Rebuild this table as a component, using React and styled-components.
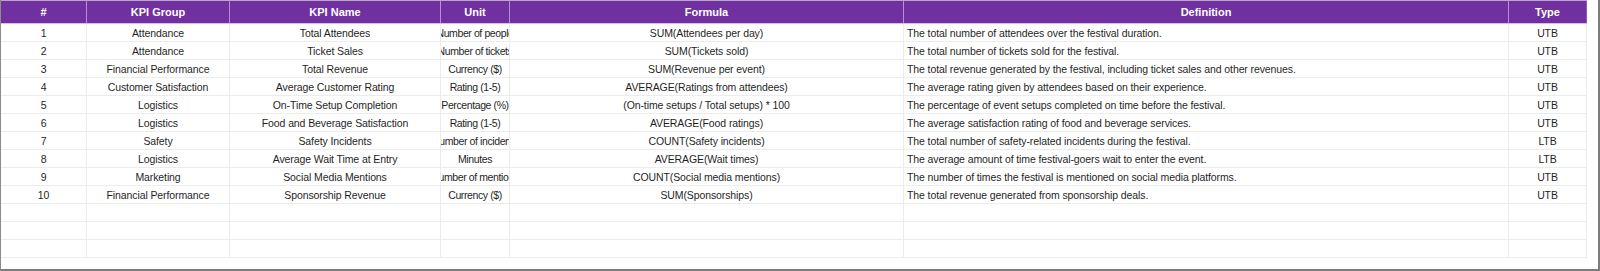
import React from "react";
import styled, { createGlobalStyle } from "styled-components";

const GlobalStyle = createGlobalStyle`
  html, body {
    margin: 0;
    padding: 0;
    background: #ffffff;
  }
  body {
    font-family: "Liberation Sans", Arial, sans-serif;
  }
`;

const columns = [
  { key: "id", label: "#", width: 86, align: "center" },
  { key: "group", label: "KPI Group", width: 143, align: "center" },
  { key: "name", label: "KPI Name", width: 211, align: "center" },
  { key: "unit", label: "Unit", width: 69, align: "center", tight: true },
  { key: "formula", label: "Formula", width: 394, align: "center" },
  { key: "definition", label: "Definition", width: 605, align: "left" },
  { key: "type", label: "Type", width: 78, align: "center" },
];

const rows = [
  ["1", "Attendance", "Total Attendees", "Number of people", "SUM(Attendees per day)", "The total number of attendees over the festival duration.", "UTB"],
  ["2", "Attendance", "Ticket Sales", "Number of tickets", "SUM(Tickets sold)", "The total number of tickets sold for the festival.", "UTB"],
  ["3", "Financial Performance", "Total Revenue", "Currency ($)", "SUM(Revenue per event)", "The total revenue generated by the festival, including ticket sales and other revenues.", "UTB"],
  ["4", "Customer Satisfaction", "Average Customer Rating", "Rating (1-5)", "AVERAGE(Ratings from attendees)", "The average rating given by attendees based on their experience.", "UTB"],
  ["5", "Logistics", "On-Time Setup Completion", "Percentage (%)", "(On-time setups / Total setups) * 100", "The percentage of event setups completed on time before the festival.", "UTB"],
  ["6", "Logistics", "Food and Beverage Satisfaction", "Rating (1-5)", "AVERAGE(Food ratings)", "The average satisfaction rating of food and beverage services.", "UTB"],
  ["7", "Safety", "Safety Incidents", "Number of incidents", "COUNT(Safety incidents)", "The total number of safety-related incidents during the festival.", "LTB"],
  ["8", "Logistics", "Average Wait Time at Entry", "Minutes", "AVERAGE(Wait times)", "The average amount of time festival-goers wait to enter the event.", "LTB"],
  ["9", "Marketing", "Social Media Mentions", "Number of mentions", "COUNT(Social media mentions)", "The number of times the festival is mentioned on social media platforms.", "UTB"],
  ["10", "Financial Performance", "Sponsorship Revenue", "Currency ($)", "SUM(Sponsorships)", "The total revenue generated from sponsorship deals.", "UTB"],
  ["", "", "", "", "", "", ""],
  ["", "", "", "", "", "", ""],
  ["", "", "", "", "", "", ""],
];

const Frame = styled.div`
  width: 1600px;
  height: 271px;
  box-sizing: border-box;
  border-left: 1px solid #8c8c8c;
  border-right: 2px solid #7c7c7c;
  border-bottom: 2px solid #7c7c7c;
  background: #ffffff;
  overflow: hidden;
`;

const Sheet = styled.div`
  width: 1586px;
  display: flex;
  flex-direction: column;
`;

const HeaderRow = styled.div`
  display: flex;
  height: 24px;
  box-sizing: border-box;
  background: #7030a0;
  border-top: 1px solid #b8a6c6;
  border-bottom: 1px solid #dcb9ee;
`;

const HeadCell = styled.div`
  width: ${(p) => p.$w}px;
  flex: none;
  box-sizing: border-box;
  display: flex;
  align-items: center;
  justify-content: center;
  border-right: 1px solid #b88fd6;
  color: #ffffff;
  font-size: 11px;
  font-weight: 700;

  &:last-child {
    border-right: 1px solid #8d5bb3;
  }
`;

const Row = styled.div`
  display: flex;
  height: 18px;
`;

const Cell = styled.div`
  width: ${(p) => p.$w}px;
  flex: none;
  box-sizing: border-box;
  display: flex;
  align-items: center;
  justify-content: ${(p) => (p.$align === "left" ? "flex-start" : "center")};
  padding: ${(p) => (p.$align === "left" ? "0 0 0 3px" : "0")};
  border-right: 1px solid #ececec;
  border-bottom: 1px solid #ececec;
  overflow: hidden;
  white-space: nowrap;
  color: #1f1f1f;
  font-size: 10.5px;
  letter-spacing: ${(p) => (p.$tight ? "-0.4px" : "-0.1px")};
`;

export default function App() {
  return (
    <>
      <GlobalStyle />
      <Frame>
        <Sheet>
          <HeaderRow>
            {columns.map((c) => (
              <HeadCell key={c.key} $w={c.width}>
                {c.label}
              </HeadCell>
            ))}
          </HeaderRow>
          {rows.map((r, i) => (
            <Row key={i}>
              {columns.map((c, j) => (
                <Cell key={c.key} $w={c.width} $align={c.align} $tight={c.tight}>
                  <span>{r[j]}</span>
                </Cell>
              ))}
            </Row>
          ))}
        </Sheet>
      </Frame>
    </>
  );
}
